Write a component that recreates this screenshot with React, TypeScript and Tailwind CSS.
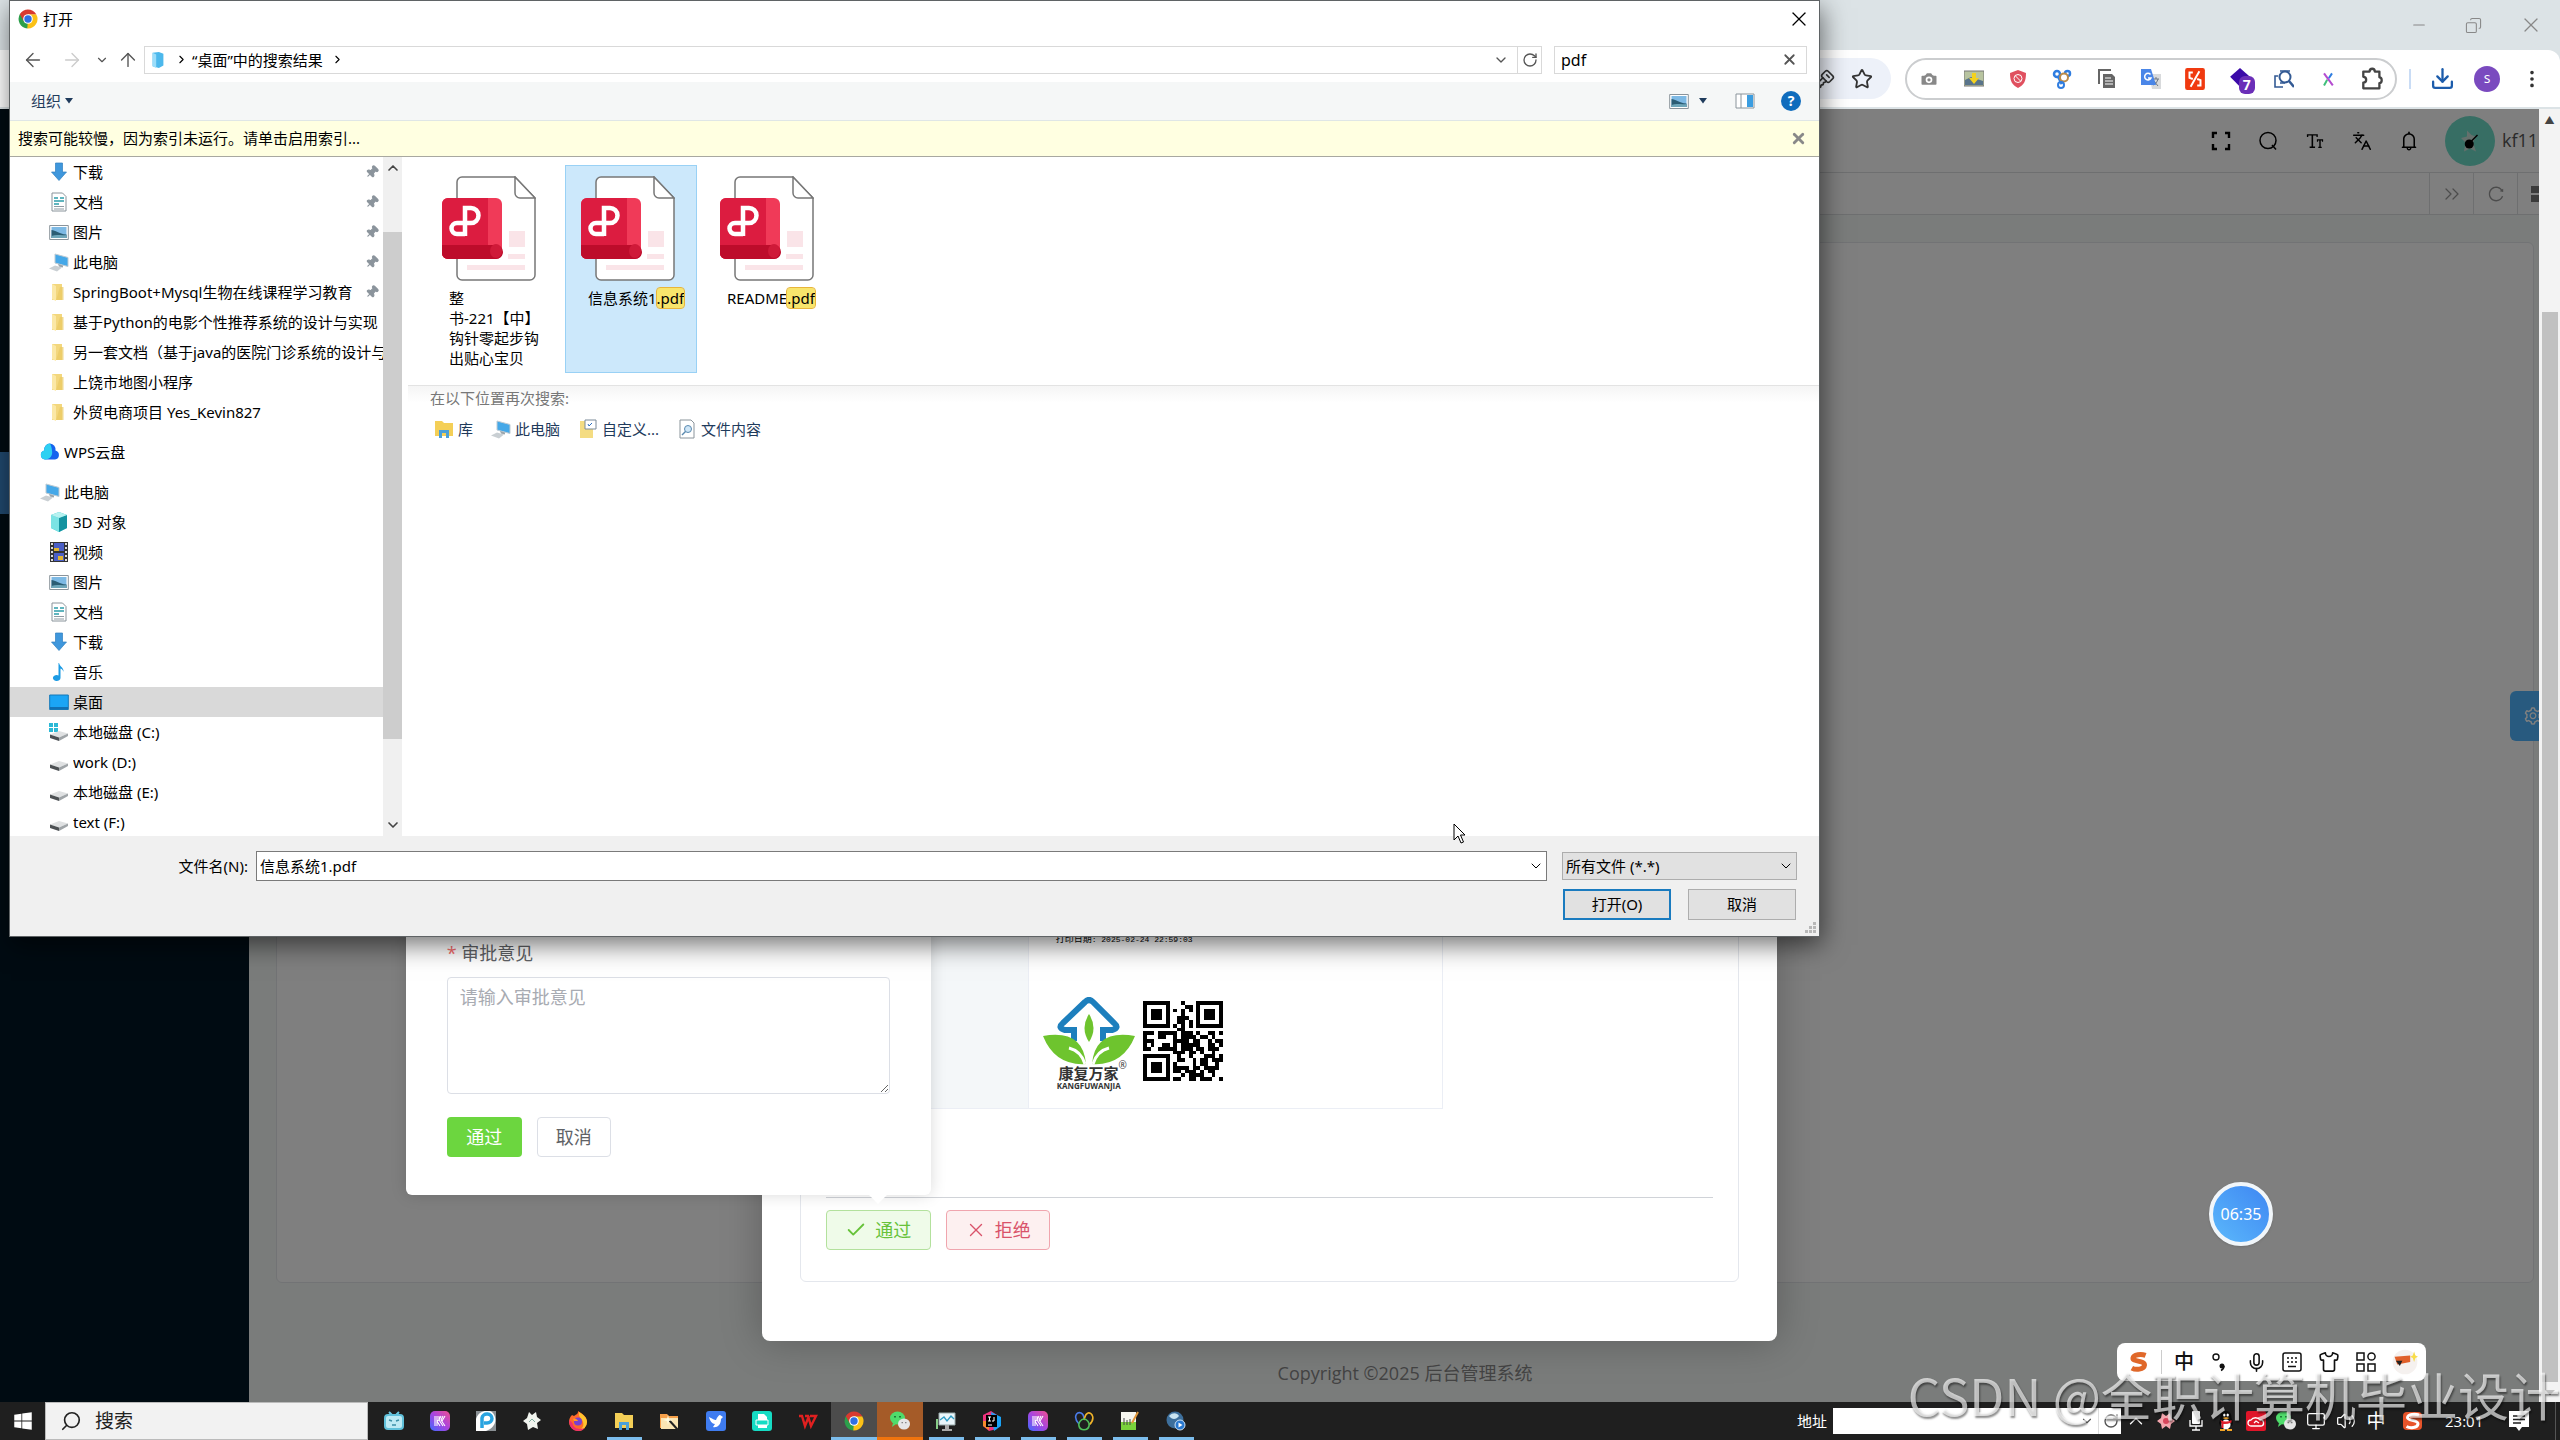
import type { ReactNode } from "react"
import {
  ArrowLeft, ArrowRight, ArrowUp, Check, ChevronDown, ChevronRight, ChevronUp, ChevronsRight,
  Camera, Copy, Download, EllipsisVertical, Languages, Mic, Minus, Monitor,
  Pin, RotateCw, Search, Shirt, Star, Volume2, X, KeySquare,
} from "lucide-react"
import { AiOutlineBell, AiOutlineFontSize, AiOutlineReload, AiOutlineSetting } from "react-icons/ai"
import { FaWindows } from "react-icons/fa"

/* ---------- icons ---------- */

function Svg({ size = 20, children }: { size?: number; children: ReactNode }) {
  return (
    <svg width={size} height={size} viewBox="0 0 20 20" fill="none" className="shrink-0" aria-hidden="true">
      {children}
    </svg>
  )
}

const Caret = () => (
  <svg width="8" height="6" viewBox="0 0 8 6" className="shrink-0" aria-hidden="true">
    <path d="M0 0h8L4 5.500z" fill="#1f3b5c" />
  </svg>
)

const ChromeIcon = ({ size = 20 }: { size?: number }) => (
  <Svg size={size}>
    <path d="M10 10V.8L1.8 5.3A9.5 9.5 0 0 0 9.3 19.5l4.5-7.2Z" fill="#2c9f4b" />
    <path d="M10 10V5.3h8.2A9.5 9.5 0 0 1 9.3 19.5Z" fill="#fbc116" />
    <path d="M1.8 5.3A9.5 9.5 0 0 1 18.2 5.3H10L5.9 12.4Z" fill="#d93a30" />
    <circle cx="10" cy="10" r="4.8" fill="#fff" />
    <circle cx="10" cy="10" r="3.7" fill="#2f6fe4" />
  </Svg>
)

const FirefoxIcon = () => (
  <Svg>
    <path d="M4 4l2 1c2-2 4-1 4-5 5 3 9 6 9 11a9 9 0 0 1-18 0c0-3 1-5 3-7z" fill="#ff6a2a" />
    <path d="M11 1c5 3 8 6 8 10a9 9 0 0 1-9 9c5-2 6-6 5-9-1-4-5-4-4-10z" fill="#ffc42e" />
    <path d="M1.500 9a9 9 0 0 0 9 11c3 0 5-1 6-3-5 2-11 1-12-5z" fill="#f0306a" />
    <circle cx="10" cy="10.500" r="4" fill="#7a3fd0" />
    <path d="M5 8c2-1 4 0 5 2h-4z" fill="#ff9a2a" />
  </Svg>
)

const WechatIcon = () => (
  <Svg>
    <ellipse cx="7.500" cy="7" rx="7.500" ry="6.500" fill="#4fdc6b" />
    <path d="M3 12l-1 4 4-3z" fill="#4fdc6b" />
    <ellipse cx="14" cy="13" rx="6" ry="5.500" fill="#e6e6e6" />
    <path d="M4 5h2v1.500H4zM9 5h2v1.500H9z" fill="#1d7a34" />
    <path d="M11.500 11h1.500v1.300h-1.500zM15 11h1.500v1.300H15z" fill="#888" />
  </Svg>
)

const QqIcon = () => (
  <Svg>
    <path d="M10 0c4 0 5.500 3 5.500 6.500L17 12l-1 3-2-1v4H6v-4l-2 1-1-3 1.500-5.500C4.500 3 6 0 10 0z" fill="#0c0c0c" />
    <ellipse cx="10" cy="13.500" rx="4.500" ry="5" fill="#fff" />
    <path d="M4.500 9q5.500 3 11 0v2.500q-5 2-8 1.500v4H5.500V12z" fill="#e2202c" />
    <ellipse cx="8.300" cy="4" rx="1.200" ry="1.600" fill="#fff" />
    <ellipse cx="11.700" cy="4" rx="1.200" ry="1.600" fill="#fff" />
    <path d="M6.500 7q3.500-1.500 7 0-3.500 2-7 0zM4 18h5v2H4zM11 18h5v2h-5z" fill="#f5a524" />
  </Svg>
)

const DownArrowIcon = () => (
  <Svg>
    <path d="M6.5 1h7v9h4L10 18.5 2.5 10h4z" fill="#3f97dc" stroke="#2f7fc0" strokeWidth=".7" />
  </Svg>
)

const DocIcon = () => (
  <Svg>
    <path d="M3 1h10.500l3.500 3.500V19H3z" fill="#fff" stroke="#8a949b" />
    <path d="M5 6h4M5 9h10M5 12h5M11 6h4" stroke="#2d9dab" strokeWidth="1.300" />
    <path d="M5 14.500h10M5 17h10" stroke="#8f9ba3" />
  </Svg>
)

const PictureIcon = () => (
  <Svg>
    <path d="M.7 3.500h18.600v14H.7z" fill="#fff" stroke="#8a949b" />
    <path d="M2.500 5h15v11h-15z" fill="#7db9e4" />
    <path d="M2.500 8c4 0 7 4 15 4.500V16h-15z" fill="#2b5d74" />
    <path d="M2.500 14c5-2 10 0 15-1v3h-15z" fill="#6ea6b9" />
  </Svg>
)

const PcIcon = () => (
  <Svg>
    <path d="M6 2l13 3.500v9L6 11z" fill="#45a8e8" stroke="#bfcbd3" />
    <path d="M0 16.500l6-3 7 2-5 4z" fill="#c9cfd3" />
    <path d="M9 12l5 1.500v2l-4-1z" fill="#9aa5ac" />
  </Svg>
)

const FolderIcon = () => (
  <Svg>
    <path d="M3 2h10v16H3z" fill="#f3d77d" />
    <path d="M3 2l4 2v15l-4-2z" fill="#fbe8a6" />
    <path d="M11 5h3.500v13H7z" fill="#eac961" opacity=".7" />
  </Svg>
)

const CloudIcon = () => (
  <Svg>
    <path d="M10 1.500a6 6 0 0 1 5.500 7A4.600 4.600 0 0 1 15 17.500H5a4.600 4.600 0 0 1-.8-9A6 6 0 0 1 10 1.500Z" fill="#1663ee" />
    <path d="M10 1.500C6 2 4 5 4.200 8.500A4.600 4.600 0 0 0 5 17.500c5 0 8-4 7-9-.3-3-1-5-2-7Z" fill="#2ed0f2" />
  </Svg>
)

const CubeIcon = () => (
  <Svg>
    <path d="M10 0l8 3v13l-8 4-8-4V3z" fill="#35c3cd" />
    <path d="M2 3l8 3v14l-8-4z" fill="#7be3e4" />
    <path d="M10 6l8-3v13l-8 4z" fill="#1393a0" />
    <path d="M10 0l8 3-8 3-8-3z" fill="#b6f2f0" />
  </Svg>
)

const VideoIcon = () => (
  <Svg>
    <path d="M1 0h18v20H1z" fill="#333" />
    <path d="M5 1h10v8H5zM5 11h10v8H5z" fill="#4b5fc5" />
    <path d="M5 6h5v3H5zM9 14h5v4H9z" fill="#e0b431" />
    <path d="M3 1v18M17 1v18" stroke="#ddd" strokeWidth="2" strokeDasharray="2 2" />
  </Svg>
)

const MusicIcon = () => (
  <Svg>
    <path d="M10 1c1 4 5 4.500 4.500 9-.5-2-1.500-3-3-3.500V16a3.800 3 0 1 1-2-2.600V1z" fill="#1c9be4" />
  </Svg>
)

const DesktopIcon = () => (
  <Svg>
    <path d="M.7 3h18.600v14.500H.7z" fill="#1ba5f5" stroke="#1478b8" />
    <path d="M1 16h18" stroke="#0f5f9c" strokeWidth="1.500" />
  </Svg>
)

const DiskIcon = ({ system = false }: { system?: boolean }) => (
  <Svg>
    {system && <path d="M0 1h4v4H0zM5 1h4v4H5zM0 6h4v4H0zM5 6h4v4H5z" fill="#2cb9d6" />}
    <path d="M1 12.500l9-3.500 9 2.500-9 4z" fill="#dfe1e2" />
    <path d="M1 12.500l9 3V19l-9-3z" fill="#4d5154" />
    <path d="M10 15.500l9-4V14l-9 5z" fill="#9fa4a7" />
  </Svg>
)

const LibraryIcon = () => (
  <Svg>
    <path d="M1 2h7l2 2h9v13H1z" fill="#f4cf57" />
    <path d="M5 19v-8h10v8h-3v-5H8v5z" fill="#4ba0d8" />
  </Svg>
)

const CustomIcon = () => (
  <Svg>
    <path d="M2 2h13v17H2z" fill="#f4dc82" />
    <path d="M7 1h11v9H7z" fill="#fff" stroke="#7a8a99" />
    <path d="M10 5l1 2 3-3" stroke="#2c6fc0" />
  </Svg>
)

const FileSearchIcon = () => (
  <Svg>
    <path d="M3 1h11l3 3v15H3z" fill="#fff" stroke="#8a949b" />
    <circle cx="11" cy="10" r="3.500" fill="#cfe6f7" stroke="#5a8ab0" />
    <path d="M8.500 12.500L5 16" stroke="#5a8ab0" strokeWidth="1.500" />
  </Svg>
)

const PdfIcon = () => (
  <svg width="94" height="105" viewBox="0 0 94 105" fill="none" aria-hidden="true">
    <path d="M15 6a5 5 0 0 1 5-5h53l20 21v77a5 5 0 0 1-5 5H20a5 5 0 0 1-5-5z" fill="#fff" stroke="#777" strokeWidth="1.500" />
    <path d="M73 1v16a5 5 0 0 0 5 5h15z" fill="#fff" stroke="#777" strokeWidth="1.500" />
    <path d="M67 55h16v16H67zM66 78h17v5H66zM25 89h58v5H25z" fill="#fae4e8" />
    <rect y="22" width="60" height="61" rx="6" fill="#f03a58" />
    <path d="M6 22h40v61H6a6 6 0 0 1-6-6V28a6 6 0 0 1 6-6z" fill="#dc1c40" />
    <path d="M0 69h54a6 6 0 0 1 0 14H6a6 6 0 0 1-6-6z" fill="#bd0c2b" />
    <ellipse cx="54" cy="75" rx="6" ry="7" fill="#cf1a39" />
    <path d="M23 60V32h6a7 7 0 0 1 0 15H15a5.500 5.500 0 0 0 0 11h8" stroke="#fff" strokeWidth="4.500" />
  </svg>
)

const KeyboardIcon = () => (
  <Svg>
    <rect x="1" y="1" width="18" height="18" rx="2" stroke="#111" strokeWidth="1.500" />
    <path d="M5 6h2M9 6h2M13 6h2M5 10h2M9 10h2M13 10h2M6 14.500h8" stroke="#111" strokeWidth="1.500" />
  </Svg>
)

const SogouIcon = ({ boxed = false }: { boxed?: boolean }) => (
  <Svg size={boxed ? 20 : 22}>
    {boxed && <rect x="0" y="1" width="19" height="18" rx="4" fill="#e8542a" />}
    <path
      d="M16 4C12 2.500 5 3 4.500 6.500 4 10 15.500 8.500 15 13c-.5 4-8 4.500-11.500 2.500"
      stroke={boxed ? "#fff" : "#e0682a"}
      strokeWidth={boxed ? 3 : 4.5}
    />
  </Svg>
)

const NotifyIcon = () => (
  <Svg>
    <path d="M0 0h20v16h-7l-3 4-3-4H0z" fill="#fff" />
    <path d="M4 5h12M4 8.500h12M4 12h8" stroke="#1f1f1f" strokeWidth="1.300" />
  </Svg>
)

const KIcon = () => (
  <Svg>
    <defs>
      <linearGradient id="kg" x1="0" y1="1" x2="1" y2="0">
        <stop stopColor="#3f6bff" />
        <stop offset=".5" stopColor="#a844e0" />
        <stop offset="1" stopColor="#f0508f" />
      </linearGradient>
    </defs>
    <rect width="20" height="20" rx="5" fill="url(#kg)" />
    <path d="M5 5v10M7 5v10M9 5v4l-2 1 3 5M11 5l-2 4 4 6M13 5l-2 4 4 6M15 5l-3 5" stroke="#fff" strokeWidth="1.100" />
  </Svg>
)

const QR = [
  "#######...#...#######",
  "#.....#....##.#.....#",
  "#.###.#.#.#.#.#.###.#",
  "#.###.#...#...#.###.#",
  "#.###.#..###..#.###.#",
  "#.....#..##.#.#.....#",
  "#######.#.#.#.#######",
  ".........##..........",
  "###.#####.###.#..##.#",
  "#...##..#.####.##.#..",
  "###.....####.##..#.##",
  "#.#..##.#.#####..##.#",
  "##..#####.###.##.###.",
  "........###.##.#..#..",
  "#######..#..#...###.#",
  "#.....#..##..#.##.###",
  "#.###.#.#....#.##..#.",
  "#.###.#.####.##.####.",
  "#.###.#.##.###.#.##..",
  "#.....#...#.####..#..",
  "#######.##..##.###..#",
]

const QrCode = () => (
  <svg width="80" height="80" viewBox="0 0 21 21" shapeRendering="crispEdges" role="img" aria-label="QR">
    {QR.map((row, y) => row.split("").map((c, x) => (c === "#" ? <rect key={x + "-" + y} x={x} y={y} width="1" height="1" /> : null)))}
  </svg>
)

const HouseLogo = () => (
  <svg width="92" height="68" viewBox="0 0 92 68" fill="none" aria-hidden="true">
    <path d="M31 44V33h-9q-8-2-2-7L42 5q4-4 8 0l21 21q6 5-2 7h-9v11" stroke="#1d7fbd" strokeWidth="6" />
    <path d="M46 17q9 14 0 28q-9-14 0-28z" fill="#6ec42e" />
    <path d="M0 39q40-7 43 28Q12 69 0 39zM92 39q-40-7-43 28Q80 69 92 39z" fill="#6ec42e" />
    <path d="M26 51q12 3 16 16M66 51q-12 3-16 16" stroke="#fff" strokeWidth="3" />
  </svg>
)

/* ---------- file dialog ---------- */

const quickAccess = [
  { icon: <DownArrowIcon />, label: "下载", pinned: true },
  { icon: <DocIcon />, label: "文档", pinned: true },
  { icon: <PictureIcon />, label: "图片", pinned: true },
  { icon: <PcIcon />, label: "此电脑", pinned: true },
  { icon: <FolderIcon />, label: "SpringBoot+Mysql生物在线课程学习教育", pinned: true },
  { icon: <FolderIcon />, label: "基于Python的电影个性推荐系统的设计与实现" },
  { icon: <FolderIcon />, label: "另一套文档（基于java的医院门诊系统的设计与" },
  { icon: <FolderIcon />, label: "上饶市地图小程序" },
  { icon: <FolderIcon />, label: "外贸电商项目 Yes_Kevin827" },
]

const thisPc = [
  { icon: <CubeIcon />, label: "3D 对象" },
  { icon: <VideoIcon />, label: "视频" },
  { icon: <PictureIcon />, label: "图片" },
  { icon: <DocIcon />, label: "文档" },
  { icon: <DownArrowIcon />, label: "下载" },
  { icon: <MusicIcon />, label: "音乐" },
  { icon: <DesktopIcon />, label: "桌面", selected: true },
  { icon: <DiskIcon system />, label: "本地磁盘 (C:)" },
  { icon: <DiskIcon />, label: "work (D:)" },
  { icon: <DiskIcon />, label: "本地磁盘 (E:)" },
  { icon: <DiskIcon />, label: "text (F:)" },
]

function NavRow({ icon, label, pinned, selected, root }: {
  icon: ReactNode
  label: string
  pinned?: boolean
  selected?: boolean
  root?: boolean
}) {
  return (
    <li className={`flex h-[30px] items-center gap-1 ${root ? "pl-[30px]" : "pl-[39px]"} ${selected ? "bg-[#d9d9d9]" : ""}`}>
      {icon}
      <span className="min-w-0 flex-1 overflow-hidden whitespace-nowrap">{label}</span>
      {pinned && <Pin size={14} className="mr-1 shrink-0 rotate-45 fill-[#8b949c] text-[#8b949c]" />}
    </li>
  )
}

function FileTile({ name, ext, selected }: { name: ReactNode; ext?: string; selected?: boolean }) {
  return (
    <button
      type="button"
      className={`flex h-[208px] w-[132px] flex-col border pt-2.5 pl-[15px] text-left ${selected ? "border-[#99d1f5] bg-[#cce8fb]" : "border-transparent"}`}
    >
      <PdfIcon />
      <span className="mt-[7px] ml-[7px] w-[100px] leading-5 whitespace-nowrap">
        {name}
        {ext && <span className="rounded-[3px] bg-[#f8e56c] outline outline-[#e8b53a]">{ext}</span>}
      </span>
    </button>
  )
}

const searchAgain = [
  { icon: <LibraryIcon />, label: "库" },
  { icon: <PcIcon />, label: "此电脑" },
  { icon: <CustomIcon />, label: "自定义..." },
  { icon: <FileSearchIcon />, label: "文件内容" },
]

function FileDialog() {
  return (
    <section className="absolute top-0 right-[740px] left-[9px] z-30 flex flex-col border border-[#5f6365] bg-white font-['Noto_Sans','Noto_Sans_CJK_SC',sans-serif] text-[15px] text-black shadow-[2px_8px_24px_rgba(0,0,0,0.55)]">
      <header className="flex h-9 items-center gap-[5px] pr-2 pl-2">
        <ChromeIcon />
        <h1>打开</h1>
        <button type="button" aria-label="关闭" className="ml-auto"><X size={24} strokeWidth={1.3} /></button>
      </header>

      <div className="flex h-[45px] items-center pr-3 pl-3 text-[#555]">
        <ArrowLeft size={22} strokeWidth={1.5} />
        <ArrowRight size={22} strokeWidth={1.5} className="ml-[17px] text-[#ccc]" />
        <ChevronDown size={14} className="ml-3" />
        <ArrowUp size={22} strokeWidth={1.5} className="ml-2" />
        <div className="ml-[5px] flex h-7 flex-1 items-center gap-2 border border-[#d9d9d9] pl-1 text-black">
          <Svg size={18}>
            <path d="M4 2l7-1 5 2v13l-5 3-7-2z" fill="#4cb8ec" />
            <path d="M4 2l4 2v15l-4-2z" fill="#9bddfa" />
          </Svg>
          <ChevronRight size={13} />
          <span className="-ml-1 leading-6">“桌面”中的搜索结果</span>
          <ChevronRight size={13} />
          <ChevronDown size={16} className="ml-auto text-[#555]" />
          <button type="button" aria-label="刷新" className="flex h-full w-6 items-center justify-center border-l border-[#d9d9d9] text-[#555]">
            <RotateCw size={16} />
          </button>
        </div>
        <div className="ml-3 flex h-7 w-[253px] items-center border border-[#d9d9d9] pr-2 pl-1.5">
          <input aria-label="搜索" defaultValue="pdf" className="min-w-0 flex-1 text-[16px] text-black outline-none" />
          <X size={17} strokeWidth={2.5} />
        </div>
      </div>

      <div className="flex h-[39px] items-center border-b border-[#dfe6e6] bg-[#f5f7f7] pr-[18px] pl-[21px] text-[#1f3b5c]">
        <button type="button" className="mr-1">组织</button>
        <Caret />
        <div className="mr-2.5 ml-auto"><PictureIcon /></div>
        <Caret />
        <div className="ml-7">
          <Svg>
            <path d="M1 3h18v14H1z" fill="#fff" stroke="#8a949b" />
            <path d="M12 4h6v12h-6z" fill="#3b9de0" />
            <path d="M6 3v14" stroke="#8a949b" />
          </Svg>
        </div>
        <button type="button" aria-label="帮助" className="ml-[26px] size-5 rounded-full bg-[#0f6cbd] text-sm leading-5 font-bold text-white">?</button>
      </div>

      <div className="flex h-9 items-center border-b border-[#a8a8a0] bg-[#ffffe1] pr-3 pl-2">
        <p>搜索可能较慢，因为索引未运行。请单击启用索引...</p>
        <X size={17} strokeWidth={4} className="ml-auto text-[#888]" />
      </div>

      <div className="flex h-[679px]">
        <nav className="w-[373px] overflow-hidden">
          <ul>{quickAccess.map((r) => <NavRow key={r.label} {...r} />)}</ul>
          <ul className="mt-2.5"><NavRow icon={<CloudIcon />} label="WPS云盘" root /></ul>
          <ul className="mt-2.5">
            <NavRow icon={<PcIcon />} label="此电脑" root />
            {thisPc.map((r) => <NavRow key={r.label} {...r} />)}
          </ul>
        </nav>
        <div className="flex w-[19px] flex-col items-center bg-[#f0f0f0] text-[#444]">
          <ChevronUp size={16} strokeWidth={2.5} className="mt-[3px] mb-14" />
          <div className="h-[507px] w-full bg-[#cdcdcd]" />
          <ChevronDown size={16} strokeWidth={2.5} className="mt-auto mb-[3px]" />
        </div>

        <div className="ml-1.5 flex-1">
          <div className="flex h-[228px] gap-[7px] pt-2 pl-[18px]">
            <FileTile name={<>整<br />书-221【中】<br />钩针零起步钩<br />出贴心宝贝</>} />
            <FileTile name="信息系统1" ext=".pdf" selected />
            <FileTile name="README" ext=".pdf" />
          </div>
          <div className="border-t border-[#e3e3e3] bg-linear-to-b from-[#f5f5f5] to-white to-30% pl-[22px]">
            <p className="leading-6 text-[#777]">在以下位置再次搜索:</p>
            <div className="mt-2 flex gap-[18px] pl-1 text-[#1f3b5c]">
              {searchAgain.map((s) => (
                <button type="button" key={s.label} className="flex items-center gap-1">
                  {s.icon}
                  {s.label}
                </button>
              ))}
            </div>
          </div>
        </div>
      </div>

      <footer className="relative h-[100px] bg-[#f0f0f0] pt-[15px] pr-[22px]">
        <div className="flex items-center">
          <label htmlFor="filename" className="w-[246px] pr-2 text-right">文件名(N):</label>
          <div className="flex h-[30px] flex-1 items-center border border-[#7a7a7a] bg-white pr-0.5 pl-[3px]">
            <input id="filename" defaultValue="信息系统1.pdf" className="min-w-0 flex-1 outline-none" />
            <ChevronDown size={16} strokeWidth={1.5} />
          </div>
          <div className="ml-[15px] flex h-7 w-[235px] items-center border border-[#adadad] bg-[#e1e1e1] pr-0.5 pl-[3px]">
            <select aria-label="文件类型" className="flex-1 appearance-none outline-none">
              <option>所有文件 (*.*)</option>
            </select>
            <ChevronDown size={16} strokeWidth={1.5} />
          </div>
        </div>
        <div className="mt-2 flex justify-end gap-[17px] pr-px">
          <button type="button" className="h-[31px] w-[108px] border-2 border-[#1a7bbf] bg-[#e1e1e1]">打开(O)</button>
          <button type="button" className="h-[31px] w-[108px] border border-[#adadad] bg-[#e1e1e1]">取消</button>
        </div>
        <svg width="12" height="12" viewBox="0 0 12 12" fill="#b8b8b8" className="absolute right-0.5 bottom-0.5" aria-hidden="true">
          <path d="M8 0h3v3H8zM8 4h3v3H8zM4 4h3v3H4zM8 8h3v3H8zM4 8h3v3H4zM0 8h3v3H0z" />
        </svg>
      </footer>
    </section>
  )
}

/* ---------- browser ---------- */

const extensions: ReactNode[] = [
  <Camera size={22} className="fill-[#888] text-white" />,
  <Svg><path d="M0 2h20v15H0z" fill="#b8c4a0" stroke="#777" /><path d="M1 11l6-3 12 4v4H1z" fill="#59748a" /><path d="M8 4h4v5h3l-5 6-5-6h3z" fill="#f4d21e" /></Svg>,
  <Svg><path d="M10 1l8 3c0 8-2 12-8 15C4 16 2 12 2 4z" fill="#e0505f" /><circle cx="10" cy="9.500" r="4" stroke="#fff" /><path d="M7.500 7l5 5" stroke="#fff" /></Svg>,
  <Svg><circle cx="5" cy="5" r="3" stroke="#2f7de0" strokeWidth="2.500" /><circle cx="15.500" cy="4.500" r="2.500" stroke="#2f7de0" strokeWidth="2.500" /><path d="M6 7l4 8" stroke="#2f7de0" strokeWidth="3" /><circle cx="12" cy="8.500" r="4" fill="#fff" stroke="#b98b4b" strokeWidth="2" /><circle cx="9" cy="16" r="3" stroke="#2f7de0" strokeWidth="2" /></Svg>,
  <Svg><path d="M2 15V1h12" stroke="#666" strokeWidth="2" /><path d="M6 5h9l3 3v11H6z" fill="#666" /><path d="M8 9h6M8 12h8M8 15h8" stroke="#fff" strokeWidth="1.200" /></Svg>,
  <Svg><path d="M8 5h12v15H11z" fill="#d8dadc" /><path d="M12 10h6M15 8v2M17 10c-1 3-2 5-5 6M13 12l4 5" stroke="#6b7580" /><path d="M0 0h10l5 16H0z" fill="#4a86e8" /><path d="M9.500 5.500A3.300 3.300 0 1 0 10 9H7" stroke="#fff" strokeWidth="1.500" /></Svg>,
  <Svg size={22}><rect x="1" width="18" height="20" rx="2" fill="#f03a10" /><path d="M8 4H5v5l3 1M14 3L6 17M12 10l3 1v5h-3" stroke="#fff" strokeWidth="1.800" /></Svg>,
  <div className="relative"><Svg size={22}><path d="M10 0l9 8-9 9-9-9z" fill="#3b0aa8" /></Svg><span className="absolute top-2 left-2.5 rounded-md bg-[#6b2fb8] px-1 text-sm leading-[18px] font-bold text-white">7</span></div>,
  <Svg><path d="M4 7H1v11h8M6 2h10M11 14l-5 0" stroke="#335a94" strokeWidth="1.600" /><circle cx="11" cy="8" r="5.500" stroke="#335a94" strokeWidth="2" /><path d="M15 12l5 6" stroke="#335a94" strokeWidth="2.500" /></Svg>,
  <Svg size={16}><path d="M15 3l-4 6" stroke="#2e7de0" strokeWidth="2.500" /><path d="M9 11l-4 7" stroke="#3fbf7a" strokeWidth="2.500" /><path d="M5 3l11 15" stroke="#b44bd0" strokeWidth="2.500" /></Svg>,
  <Svg size={23}><path d="M2 4h5.500a2 2.200 0 0 1 4.500 0h4v5a2 2.500 0 0 1 0 5v4.500H2v-5a2.500 2.500 0 0 0 0-5z" stroke="#444" strokeWidth="2" strokeLinejoin="round" /></Svg>,
]

function BrowserChrome() {
  return (
    <header className="shrink-0 bg-[#dce3e6]">
      <div className="flex h-[50px] items-center justify-end gap-[37px] pr-[17px] text-[#888]">
        <Minus size={18} strokeWidth={1.5} />
        <Copy size={17} strokeWidth={1.5} className="-scale-x-100" />
        <X size={24} strokeWidth={1.2} />
      </div>
      <div className="flex h-[57px] items-center justify-end rounded-tr-xl bg-white pr-[17px] text-[#333]">
        <div className="flex h-[41px] w-[600px] items-center justify-end gap-4 rounded-full bg-[#edf1f9] pr-[18px]">
          <KeySquare size={20} />
          <Star size={22} strokeWidth={2} />
        </div>
        <div className="ml-3.5 flex h-[42px] w-[492px] items-center justify-around rounded-full border-2 border-[#cbcdcf]">
          {extensions.map((e, i) => <div key={i} className="flex w-5 justify-center">{e}</div>)}
        </div>
        <span className="ml-3 h-5 w-0.5 bg-[#c9dcf5]" />
        <Download size={25} strokeWidth={2.2} className="ml-[19px] text-[#1c5cab]" />
        <span className="ml-[19px] size-[26px] rounded-full bg-[#7a4abf] text-center text-sm leading-6 text-white">s</span>
        <EllipsisVertical size={22} className="ml-[21px]" />
      </div>
      <div className="h-0.5" />
    </header>
  )
}

function ApprovePopover() {
  return (
    <form className="absolute right-0 bottom-full mb-[15px] w-[525px] rounded-md bg-white px-[41px] pt-20 pb-[38px] shadow-[0_0_16px_rgba(0,0,0,0.15)]">
      <label htmlFor="opinion" className="block leading-7 text-[#606266]">
        <span className="text-[#f56c6c]">*</span> 审批意见
      </label>
      <textarea
        id="opinion"
        placeholder="请输入审批意见"
        className="mt-2.5 block h-[117px] w-full resize-y rounded border border-[#dcdfe6] px-3 py-1.5 placeholder:text-[#a8abb2]"
      />
      <div className="mt-[23px] flex gap-[15px]">
        <button type="button" className="h-10 w-[75px] rounded bg-[#6cd63f] text-white">通过</button>
        <button type="button" className="h-10 w-[74px] rounded border border-[#dcdfe6] text-[#606266]">取消</button>
      </div>
      <span className="absolute right-[46px] -bottom-1.5 size-3.5 rotate-45 bg-white" />
    </form>
  )
}

function ReviewDialog() {
  return (
    <div className="absolute inset-0 z-10 flex items-end justify-center bg-black/50 pb-[61px]">
      <section className="w-2/5 rounded-lg bg-white px-[38px] pt-40 pb-[59px] shadow-[0_0_40px_rgba(0,0,0,0.25)]">
        <div className="rounded-md border border-[#e4e7ed] px-[25px] pt-5 pb-[31px]">
          <table className="mb-[88px] h-[300px] border-collapse border border-[#ebeef5]">
            <tbody>
              <tr>
                <th className="w-[202px] border border-[#ebeef5] bg-[#f4f7f9]" aria-label="报告" />
                <td className="w-[414px] border border-[#ebeef5] pt-2 pb-[18px] pl-3.5 align-bottom">
                  <p className="mb-[51px] pl-[13px] font-['Liberation_Mono','Noto_Sans_CJK_SC',monospace] text-[8px] leading-3 text-black">
                    <span className="text-[9px]">打印日期</span>: 2025-02-24 22:59:03
                  </p>
                  <div className="flex items-start gap-2">
                    <div className="flex w-[92px] flex-col items-center">
                      <HouseLogo />
                      <span className="flex pl-2 text-[15px] leading-4 font-bold text-[#333]">康复万家<sup className="text-[10px] leading-none font-normal">®</sup></span>
                      <span className="text-[8px] leading-[9px] font-bold text-[#333]">KANGFUWANJIA</span>
                    </div>
                    <div className="pt-1"><QrCode /></div>
                  </div>
                </td>
              </tr>
            </tbody>
          </table>
          <div className="flex gap-[15px] border-t border-[#d0d3d8] pt-3">
            <div className="relative">
              <button type="button" className="flex h-10 w-[105px] items-center justify-center gap-2 rounded border border-[#b3e19d] bg-[#effbe9] text-[#67c23a]">
                <Check size={22} />通过
              </button>
              <ApprovePopover />
            </div>
            <button type="button" className="flex h-10 w-[104px] items-center justify-center gap-2 rounded border border-[#f0a5ae] bg-[#fdf0f0] text-[#d9536a]">
              <X size={22} strokeWidth={1.5} />拒绝
            </button>
          </div>
        </div>
      </section>
    </div>
  )
}

function AdminPage() {
  return (
    <div className="flex min-h-0 flex-1 text-[18px]">
      <div className="relative flex min-w-0 flex-1">
        <aside className="w-[249px] bg-[#001624]">
          <div className="mt-[343px] h-[62px] bg-[#4090dc]" />
        </aside>
        <div className="flex min-w-0 flex-1 flex-col overflow-hidden bg-[#f5f8f7]">
          <header className="flex h-16 items-center justify-end border-b border-[#dcdfe0] bg-white pr-0.5 text-black">
            {[
              <Svg><path d="M2 7V2h4M14 2h4v5M18 13v5h-4M6 18H2v-5" stroke="#000" strokeWidth="2.400" /></Svg>,
              <Svg><circle cx="10" cy="9.500" r="8" stroke="#000" strokeWidth="1.500" /><path d="M14 14l4 4.500" stroke="#000" strokeWidth="1.500" /></Svg>,
              <AiOutlineFontSize size={20} />,
              <Languages size={20} strokeWidth={1.8} />,
              <AiOutlineBell size={22} />,
            ].map((icon, i) => (
              <button type="button" key={i} className="flex w-[47px] justify-center">{icon}</button>
            ))}
            <span className="ml-[13px] flex size-[50px] items-center justify-center rounded-full bg-[#6fdcc8]">
              <Svg size={30}>
                <path d="M8 3l3 3 3 1-2 4 2 6-4-2-4 2 1-6-3-3 4-1z" fill="#c9e0d8" />
                <circle cx="9.500" cy="12" r="3" fill="#000" />
                <path d="M10 11l5-5" stroke="#000" />
              </Svg>
            </span>
            <span className="ml-[7px] w-[35px] text-[#555]">kf11</span>
          </header>
          <div className="flex h-[42px] justify-end border-b border-[#dcdfe0] bg-white text-[#999]">
            <button type="button" className="flex w-11 items-center justify-center border-l border-[#dcdfe0]"><ChevronsRight size={24} strokeWidth={1.3} /></button>
            <button type="button" className="flex w-11 items-center justify-center border-l border-[#dcdfe0]"><AiOutlineReload size={18} /></button>
            <div className="flex w-[22px] items-center justify-end overflow-hidden border-l border-[#dcdfe0]">
              <svg width="8" height="16" viewBox="0 0 8 16" fill="#777" aria-hidden="true"><path d="M0 0h8v7H0zM0 9h8v7H0z" /></svg>
            </div>
          </div>
          <main className="flex flex-1 flex-col pt-[27px] pr-[5px] pl-[27px]">
            <div className="flex-1 rounded-md border border-[#e4e7ea] bg-white" />
            <footer className="flex h-[119px] items-end justify-center pb-[15px] text-[#888]">
              Copyright ©2025 后台管理系统
            </footer>
          </main>
        </div>
        <button type="button" aria-label="设置" className="absolute top-[582px] right-0 flex h-[50px] w-[29px] items-center justify-end overflow-hidden rounded-l-md bg-[#50b4ff] text-white">
          <AiOutlineSetting size={20} className="-mr-1 shrink-0" />
        </button>
        <ReviewDialog />
      </div>
      <div className="flex w-[21px] flex-col items-center bg-[#f3f3f3] text-[10px] text-[#444]">
        <span className="mt-1">▲</span>
        <div className="mt-auto h-[1070px] w-4 bg-[#c1c1c1]" />
        <svg width="10" height="20" viewBox="0 0 10 20" aria-hidden="true"><path d="M0 8h10l-5 5z" fill="#555" /></svg>
      </div>
    </div>
  )
}

/* ---------- taskbar ---------- */

type TaskItem = { icon: ReactNode; open?: boolean; active?: boolean; alert?: boolean }

const taskItems: TaskItem[] = [
  { icon: <Svg><path d="M5 1l3 3h4l3-3" stroke="#6cc8e0" strokeWidth="2" /><rect x="1" y="4" width="18" height="14" rx="3" fill="#bdeaf4" stroke="#5fc0da" strokeWidth="2" /><path d="M5 9l3 1M15 9l-3 1M8 14h4" stroke="#3a8ea6" strokeWidth="1.500" /></Svg> },
  { icon: <KIcon /> },
  { icon: <Svg><path d="M0 0h20v20H0z" fill="#8a9094" /><path d="M0 20V8c2-8 12-10 16-7 6 6 4 16-6 19z" fill="#fff" /><path d="M6 17V7a5 4.500 0 1 1 5 5H8" stroke="#2aa4e0" strokeWidth="3.500" /></Svg> },
  { icon: <Svg><path d="M7 1l3 3 4-3 1 5 4 3-4 3 1 6-5-2-5 3-1-6-4-3 4-3z" fill="#f2f5ef" /><path d="M7 11l3-3 3 3" stroke="#7fae9e" /></Svg> },
  { icon: <FirefoxIcon /> },
  { icon: <LibraryIcon />, open: true },
  { icon: <Svg><path d="M0 3h7l2 2h9v12H0z" fill="#f6a04a" /><path d="M1 7h17v11H1z" fill="#fbe6b4" /><path d="M9 9l9 10" stroke="#222" strokeWidth="2" /><path d="M8 4l1 4 4 1-4 1-1 4-1-4-4-1 4-1z" fill="#fffbe0" /></Svg> },
  { icon: <Svg><rect width="20" height="20" rx="3" fill="#3f7cf0" /><path d="M3 6c4 2 5 3 7 3 1-3 3-5 4-5l3 2-2 2c0 6-4 9-8 8l2-3C6 13 4 10 3 6z" fill="#fff" /></Svg> },
  { icon: <Svg><rect width="20" height="20" rx="3" fill="#16dcc4" /><path d="M6 3h6l3 3v11H6z" fill="#fff" /><path d="M4 9h12v5H4z" fill="#16dcc4" stroke="#fff" /></Svg> },
  { icon: <Svg><path d="M1 5h3l3 10 4-10M7 5h3l3 10 5-10h-6" stroke="#e02020" strokeWidth="2.400" /></Svg> },
  { icon: <ChromeIcon />, open: true, active: true },
  { icon: <WechatIcon />, alert: true },
  { icon: <Svg><path d="M3 2h16v12H3z" fill="#eaf6fb" stroke="#9aa" /><path d="M4 9l4-3 3 4 4-5 3 3" stroke="#2f9cc4" strokeWidth="1.300" /><path d="M9 14h4v4h3v2H6v-2h3z" fill="#aaa" /><path d="M0 8h2v10H0z" fill="#8c8" /></Svg>, open: true },
  { icon: <Svg><path d="M1 4l8-4 6 4v14l-8 2-6-5z" fill="#f0337f" /><path d="M9 1l10 5v9l-7 5z" fill="#1aa2f5" /><path d="M1 10l6 0v9l-6-4z" fill="#f98a2c" /><path d="M4 4h11v12H4z" fill="#000" /><path d="M6 6h3M7.500 6v4M6 10h3M12 6v4h-2M6 14h4" stroke="#fff" /></Svg>, open: true },
  { icon: <KIcon />, open: true },
  { icon: <Svg><path d="M5 13C-1 7 2 0 7 2c2 1 3 3 3 6" stroke="#4a7be8" strokeWidth="1.600" /><path d="M15 14c7-6 3-13-1-12-3 1-3 4-4 7" stroke="#f0b42a" strokeWidth="1.600" /><path d="M10 8c-3 0-6 4-5 7 1 5 9 5 10 0 1-3-2-7-5-7z" stroke="#4fbf5a" strokeWidth="1.600" /></Svg>, open: true },
  { icon: <Svg><path d="M1 1h15v18H1z" fill="#f5f5ee" /><path d="M1 11h15v8H1z" fill="#7ad23c" /><path d="M4 14V7M7 14V9M10 14V8" stroke="#444" /><path d="M18 1l-6 11" stroke="#e0963a" strokeWidth="2" /></Svg>, open: true },
  { icon: <Svg><circle cx="9" cy="9" r="8.500" fill="#3d6f9c" /><path d="M3 5c4-4 8-3 10 0-3 4-7 4-10 0z" fill="#c9e4f2" /><circle cx="14" cy="14" r="5" fill="#2878d0" stroke="#cfe3f5" /><path d="M12.500 11.500l4 2.500-4 2.500z" fill="#fff" /></Svg>, open: true },
]

function Taskbar() {
  return (
    <footer className="flex h-[38px] shrink-0 items-center bg-[#1f1f1f] text-white">
      <button type="button" aria-label="开始" className="flex w-[45px] justify-center"><FaWindows size={20} /></button>
      <div className="flex h-full w-[323px] items-center border border-[#bbb] bg-[#f2f2f2] pl-3.5 text-[#222]">
        <Search size={22} strokeWidth={1.8} className="-scale-x-100" />
        <input aria-label="搜索" placeholder="搜索" className="ml-[13px] min-w-0 flex-1 text-[19px] outline-none placeholder:text-[#222]" />
      </div>
      <div className="ml-[3px] flex h-full">
        {taskItems.map((t, i) => (
          <button
            type="button"
            key={i}
            className={`flex w-[46px] flex-col items-center justify-end ${t.active ? "bg-[#4c4c4c]" : t.alert ? "bg-[#a55b28]" : ""}`}
          >
            <span className="flex flex-1 items-center pt-[3px]">{t.icon}</span>
            <span className={`h-[3px] ${t.alert ? "w-full bg-[#f0740e]" : t.active ? "w-full bg-[#7cbdec]" : t.open ? "w-[35px] bg-[#7cbdec]" : "w-0"}`} />
          </button>
        ))}
      </div>
      <label htmlFor="address" className="ml-auto text-[15px]">地址</label>
      <div className="ml-1.5 flex h-[26px] w-[288px] items-center bg-white text-[#555]">
        <input id="address" className="min-w-0 flex-1 outline-none" />
        <ChevronDown size={14} />
        <span className="mx-1 h-full w-px bg-[#ddd]" />
        <RotateCw size={16} className="mr-0.5" />
      </div>
      <div className="flex items-center">
        {[
          <ChevronUp size={22} strokeWidth={1.5} />,
          <Svg><path d="M6 2l4 3 4-3 1 5 4 3-4 3-1 5-4-3-4 3-1-5-4-3 4-3z" fill="#f4a6ae" /><circle cx="10" cy="10" r="3" fill="#d8465c" /></Svg>,
          <Svg><rect x="6" width="8" height="13" rx="1" fill="#fff" /><path d="M4 9v6h12V9M10 15v4M6 19h8" stroke="#fff" strokeWidth="1.300" /></Svg>,
          <QqIcon />,
          <Svg><rect width="20" height="20" rx="2" fill="#e01529" /><path d="M5 15a3 3 0 0 1 0-6 5 4 0 0 1 9 0 3 3 0 0 1 1 6zM8 12l2-2 3 2" stroke="#fff" strokeWidth="1.300" /></Svg>,
          <WechatIcon />,
          <Monitor size={20} strokeWidth={1.5} />,
          <Volume2 size={20} strokeWidth={1.5} />,
          <span className="text-[19px]">中</span>,
        ].map((icon, i) => (
          <span key={i} className="flex w-[30px] justify-center">{icon}</span>
        ))}
      </div>
      <span className="ml-3"><SogouIcon boxed /></span>
      <time className="ml-[22px] w-[40px] text-[15px]">23:01</time>
      <span className="ml-6"><NotifyIcon /></span>
      <span className="mr-1 ml-[26px] h-full w-px bg-[#555]" />
    </footer>
  )
}

function ImeBar() {
  return (
    <div className="absolute right-[134px] bottom-[59px] z-20 flex h-[38px] w-[309px] items-center rounded-lg bg-white pl-[11px] text-[#111]">
      <SogouIcon />
      <span className="mr-1 ml-[11px] h-6 w-px bg-[#ccc]" />
      <div className="flex flex-1 items-center justify-around">
        <span className="text-[20px] leading-5 font-medium">中</span>
        <Svg><circle cx="6" cy="5" r="3" stroke="#111" strokeWidth="1.400" /><circle cx="12" cy="14" r="2.500" fill="#111" /><path d="M14 14q0 3-3 4.500" stroke="#111" strokeWidth="1.500" /></Svg>
        <Mic size={21} strokeWidth={1.8} />
        <KeyboardIcon />
        <Shirt size={22} strokeWidth={1.8} />
        <Svg><path d="M1 1h7v7H1zM1 12h7v7H1zM12 12h7v7h-7z" stroke="#111" strokeWidth="1.500" /><circle cx="15.500" cy="4.500" r="3.600" stroke="#111" strokeWidth="1.500" /></Svg>
        <Svg size={26}><circle cx="10" cy="10" r="9.500" fill="#f5f1ef" /><path d="M2 6l12-1v5L4 12z" fill="#e0602a" /><path d="M3 9h5l-2 4z" fill="#222" /><path d="M17 2l1 3 2 1-2 1-1 3-1-3-2-1 2-1z" fill="#f8dc4a" /></Svg>
      </div>
    </div>
  )
}

export default function App() {
  return (
    <div className="relative flex h-screen flex-col overflow-hidden bg-[#1f1f1f] font-['Open_Sans','Noto_Sans_CJK_SC',sans-serif]">
      <BrowserChrome />
      <AdminPage />
      <Taskbar />

      <FileDialog />
      <div className="absolute right-[287px] bottom-[194px] z-20 flex size-16 items-center justify-center rounded-full border-4 border-[#f1f6fa] bg-linear-to-tr from-[#5cb8fb] to-[#3f86f2] font-['Noto_Sans',sans-serif] text-[16px] text-white shadow">
        06:35
      </div>
      <ImeBar />
      <svg width="14" height="22" viewBox="0 0 14 22" className="absolute top-[823px] left-[1453px] z-40" aria-hidden="true">
        <path d="M1 1v16l4-4 3 7 2.500-1-3-7H12z" fill="#fff" stroke="#000" />
      </svg>
      <p className="pointer-events-none absolute right-0 bottom-2 z-50 font-['Noto_Sans_CJK_SC',sans-serif] text-[51px] leading-[76px] whitespace-nowrap text-white/65 [text-shadow:1px_2px_2px_rgba(0,0,0,0.45)]">
        CSDN @全职计算机毕业设计
      </p>
    </div>
  )
}
